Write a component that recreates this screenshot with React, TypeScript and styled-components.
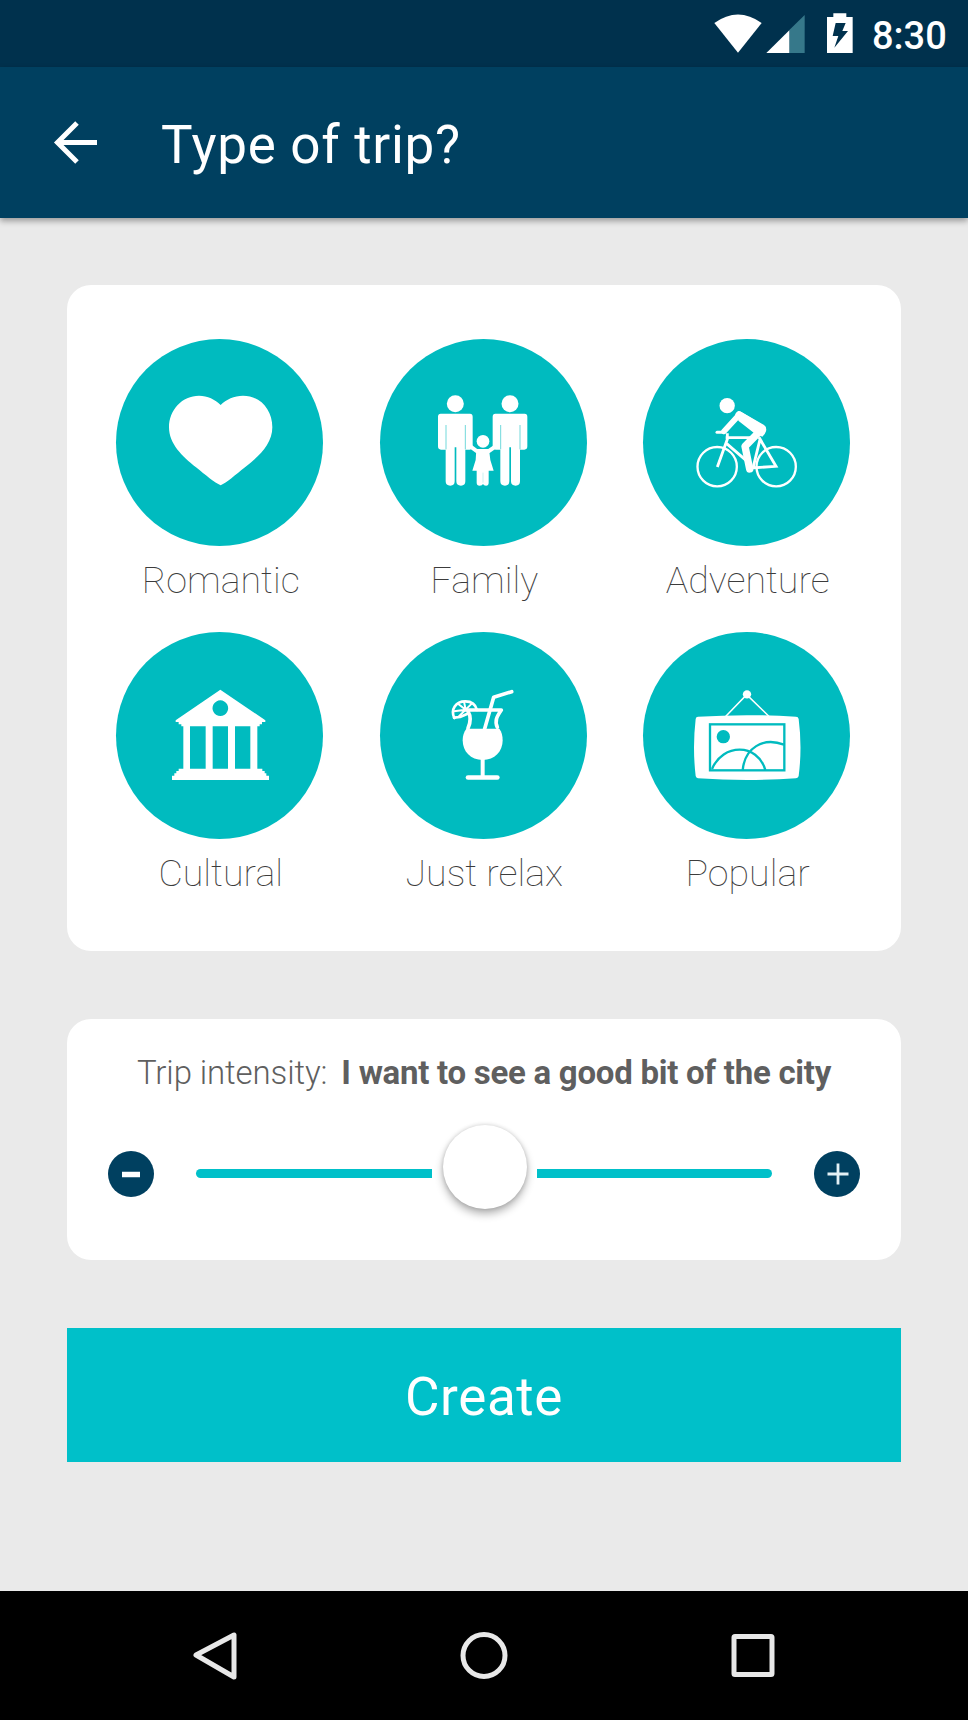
import React from "react";
import styled, { createGlobalStyle } from "styled-components";

const GlobalStyle = createGlobalStyle`
  * { box-sizing: border-box; }
  body { margin: 0; background: #eaeaea; font-family: Roboto, "Noto Sans", sans-serif; }
  button { font: inherit; border: 0; padding: 0; background: none; color: inherit; }
  svg { display: block; flex: none; }
`;

const Screen = styled.div`
  width: 968px;
  height: 1720px;
  display: flex;
  flex-direction: column;
  overflow: hidden;
  background: #eaeaea;
`;

const StatusBar = styled.div`
  flex: none;
  height: 67px;
  display: flex;
  align-items: center;
  justify-content: flex-end;
  padding-right: 22px;
  background: #00314d;
  color: #fff;
`;

const Clock = styled.span`
  width: 74px;
  margin-left: 18px;
  padding-top: 4px;
  font-size: 38px;
  font-weight: 500;
  line-height: 44px;
  white-space: nowrap;
`;

const AppBar = styled.header`
  flex: none;
  height: 151px;
  display: flex;
  align-items: center;
  gap: 62px;
  padding: 0 52px;
  background: #004060;
  color: #fff;
  box-shadow: 0 3px 6px rgba(0, 0, 0, 0.35);
  z-index: 1;
`;

const Title = styled.h1`
  margin: 4px 0 0;
  font-size: 53px;
  font-weight: 400;
  line-height: 64px;
  letter-spacing: 0.7px;
`;

const Content = styled.main`
  flex: 1;
  display: flex;
  flex-direction: column;
  gap: 68px;
  padding: 67px 67px 0;
`;

const Card = styled.section`
  background: #fff;
  border-radius: 24px;
  color: #5f5f5f;
`;

const TripCard = styled(Card)`
  height: 666px;
  padding: 54px 22.4px 0 21.2px;
  display: grid;
  grid-template-columns: repeat(3, 1fr);
  grid-auto-rows: 293px;
`;

const TripOption = styled.button`
  display: flex;
  flex-direction: column;
  align-items: center;
`;

const Disc = styled.span`
  width: 207px;
  height: 207px;
  border-radius: 50%;
  background: #00bbbf;
`;

const TripLabel = styled.span`
  margin-top: 12px;
  padding-left: 1.6px;
  font-size: 37.6px;
  font-weight: 100;
  line-height: 44px;
  color: #3c3c3c;
`;

const IntensityCard = styled(Card)`
  height: 241px;
  padding: 35px 41px 0;
`;

const IntensityText = styled.p`
  margin: 0;
  display: flex;
  justify-content: center;
  gap: 14px;
  font-size: 33px;
  font-weight: 300;
  line-height: 38px;
  letter-spacing: -0.12px;
  white-space: nowrap;
`;

const Strong = styled.strong`
  font-weight: 700;
  letter-spacing: -0.27px;
`;

const SliderRow = styled.div`
  margin-top: 59px;
  display: flex;
  align-items: center;
  justify-content: space-between;
`;

const StepButton = styled.button`
  width: 46px;
  height: 46px;
  border-radius: 50%;
  background: #004060;
`;

const Slider = styled.div`
  width: 576px;
  margin-bottom: 1px;
  display: flex;
  align-items: center;
  justify-content: space-between;
`;

const Track = styled.div<{ $side: "left" | "right" }>`
  width: ${(p) => (p.$side === "left" ? 236 : 235)}px;
  height: 9px;
  background: #00c0c9;
  border-radius: ${(p) => (p.$side === "left" ? "5px 0 0 5px" : "0 5px 5px 0")};
`;

const Thumb = styled.div`
  width: 84px;
  height: 84px;
  margin: -26px 0 -13px;
  border-radius: 50%;
  background: #fff;
  box-shadow: 0 5px 9px rgba(0, 0, 0, 0.3), 0 0 4px rgba(0, 0, 0, 0.16);
`;

const CreateButton = styled.button`
  flex: none;
  height: 134px;
  padding-top: 4px;
  background: #00c0c9;
  color: #fff;
  font-size: 53px;
  line-height: 64px;
  letter-spacing: 0.6px;
`;

const NavBar = styled.nav`
  flex: none;
  height: 129px;
  display: flex;
  justify-content: center;
  gap: 221px;
  padding-top: 39px;
  background: #000;
`;

const WHITE = "#fff";
const TEAL = "#00bbbf";

function HeartIcon() {
  return (
    <svg width="207" height="207" viewBox="49 57 621 621">
      <path
        fill={WHITE}
        d="M363 255C346 238 324 227 298 227C248 227 208 269 208 322C208 372 248 409 289 442C317 465 345 488 363 496C381 488 407 465 436 442C478 409 518 372 518 322C518 269 482 227 430 227C404 227 379 238 363 255Z"
      />
    </svg>
  );
}

function Adult({ x }: { x: number }) {
  return (
    <g transform={`translate(${x} 0)`}>
      <circle cx="0" cy="251" r="25.500" fill={WHITE} />
      <path
        fill={WHITE}
        d="M-44 281H44Q52 281 52 290V379Q52 389 43 389H30V484Q30 497 17 497Q3 497 3 484V382H-2V484Q-2 497-15 497Q-29 497-29 484V389H-43Q-52 389-52 379V290Q-52 281-44 281Z"
      />
      <path d="M-28 315V388M30 315V388" stroke={TEAL} strokeWidth="3" opacity=".55" />
    </g>
  );
}

function FamilyIcon() {
  return (
    <svg width="207" height="207" viewBox="30 57 621 621">
      <Adult x={256} />
      <Adult x={420} />
      <circle cx="339" cy="364" r="19" fill={WHITE} />
      <path d="M298 377L320 393H357L380 377" fill="none" stroke={WHITE} strokeWidth="12" />
      <path
        fill={WHITE}
        d="M319 387H357L361 420L371 452H356V488Q356 497 348 497Q341 497 339 492Q337 497 329 497Q320 497 320 488V452H307L317 420Z"
      />
      <path d="M339 458V488" stroke={TEAL} strokeWidth="1.500" opacity=".4" />
    </svg>
  );
}

function BikeIcon() {
  return (
    <svg width="207" height="207" viewBox="39 57 621 621">
      <circle cx="291.500" cy="257" r="23" fill={WHITE} />
      <g fill="none" stroke={WHITE}>
        <circle cx="261.500" cy="440" r="59" strokeWidth="7" />
        <circle cx="438.500" cy="440" r="59" strokeWidth="7" />
        <path d="M262 441L292 358V340M287 353H372M290 371L356 428M387 352L438 439L362 444M390 358L370 440" strokeWidth="8.500" />
        <path d="M261 337H282" strokeWidth="9" strokeLinecap="round" />
        <path d="M282 334L327 285" strokeWidth="17" strokeLinecap="round" />
        <path d="M327 285L396 327L345 379L359 447" strokeWidth="22" strokeLinejoin="round" strokeLinecap="round" />
      </g>
      <path fill={WHITE} d="M323 274Q328 272 333 275L402 315Q411 321 408 334Q405 344 397 350L371 338L325 302Z" />
    </svg>
  );
}

function MuseumIcon() {
  return (
    <svg width="207" height="207" viewBox="49 36 621 621">
      <path
        fill={WHITE}
        fillRule="evenodd"
        d="M362 209L497 301V306H487V313H480V319H473V446H488V453H495V460H500V467H508V480H217V467H224V460H230V453H237V446H251V319H245V313H237V306H228V301ZM362 241a23.500 23.500 0 1 0 .01 0ZM271 319V446H318V319ZM339 319V446H385V319ZM406 319V446H452V319Z"
      />
    </svg>
  );
}

function CocktailIcon() {
  return (
    <svg width="207" height="207" viewBox="30 36 621 621">
      <g fill="none" stroke={WHITE} strokeLinecap="round" strokeLinejoin="round">
        <path d="M344 326L371 232L425 215" strokeWidth="11" />
        <path d="M284 270H394C381 289 373 302 382 322M294 274C305 292 301 309 294 325" strokeWidth="11" />
        <path d="M253 294C241 268 257 244 286 244C304 244 317 254 321 270" strokeWidth="8" />
        <path d="M252 293L270 291L291 282" strokeWidth="8" />
        <path d="M287 269L252 274M287 269L264 251M287 269L282 245M287 269L306 250M287 269L265 291" strokeWidth="6" />
        <path d="M338 410V468" strokeWidth="12" />
        <path d="M294 472.500H382" strokeWidth="14" />
      </g>
      <path fill={WHITE} d="M289 326H388C395 336 398 347 398 361C398 395 374 420 338 420C302 420 278 395 278 361C278 347 282 336 289 326Z" />
    </svg>
  );
}

function PictureIcon() {
  return (
    <svg width="207" height="207" viewBox="39 36 621 621">
      <path d="M286 290L350 224L418 290" fill="none" stroke={WHITE} strokeWidth="4.500" />
      <circle cx="351" cy="223" r="12.500" fill={WHITE} />
      <path fill={WHITE} d="M204 290Q351 281 498 290Q505 290 506 297Q517 383 506 468Q505 474 498 475Q351 485 204 475Q198 474 197 468Q187 383 197 297Q198 290 204 290Z" />
      <g fill="none" stroke={TEAL} strokeWidth="7">
        <rect x="240" y="313" width="223" height="138" />
        <path d="M246 447C278 370 382 368 406 450M338 451C344 384 399 350 462 374" />
      </g>
      <circle cx="280" cy="350" r="20" fill={TEAL} />
    </svg>
  );
}

const trips = [
  { label: "Romantic", Icon: HeartIcon },
  { label: "Family", Icon: FamilyIcon },
  { label: "Adventure", Icon: BikeIcon },
  { label: "Cultural", Icon: MuseumIcon },
  { label: "Just relax", Icon: CocktailIcon },
  { label: "Popular", Icon: PictureIcon },
];

export default function App() {
  return (
    <>
      <GlobalStyle />
      <Screen>
        <StatusBar>
          <svg width="140" height="67" viewBox="0 0 420 201">
            <path fill={WHITE} d="M1 69Q72 18 143 69L72 158Z" />
            <path fill="#36788a" d="M226 90L272 45V159H226Z" />
            <path fill={WHITE} d="M157 159L226 91V159Z" />
            <path fill={WHITE} fillRule="evenodd" d="M339 51H358V40H397V51H416V159H339ZM365 69L356 108H373L361 143L402 93H385L395 69Z" />
          </svg>
          <Clock>8:30</Clock>
        </StatusBar>
        <AppBar>
          <svg width="47" height="47" viewBox="0 0 47 47">
            <path d="M45 23.500H6M25 4L5.500 23.500L25 43" fill="none" stroke={WHITE} strokeWidth="5" />
          </svg>
          <Title>Type of trip?</Title>
        </AppBar>
        <Content>
          <TripCard>
            {trips.map(({ label, Icon }) => (
              <TripOption key={label}>
                <Disc>
                  <Icon />
                </Disc>
                <TripLabel>{label}</TripLabel>
              </TripOption>
            ))}
          </TripCard>
          <IntensityCard>
            <IntensityText>
              <span>Trip intensity:</span>
              <Strong>I want to see a good bit of the city</Strong>
            </IntensityText>
            <SliderRow>
              <StepButton aria-label="Less">
                <svg width="46" height="46" viewBox="0 0 46 46">
                  <path d="M14 23.500H32" stroke={WHITE} strokeWidth="5.500" />
                </svg>
              </StepButton>
              <Slider>
                <Track $side="left" />
                <Thumb />
                <Track $side="right" />
              </Slider>
              <StepButton aria-label="More">
                <svg width="46" height="46" viewBox="0 0 46 46">
                  <path d="M13.500 23H34.500M24 12.500V33.500" stroke="#e3f1f6" strokeWidth="2.800" />
                </svg>
              </StepButton>
            </SliderRow>
          </IntensityCard>
          <CreateButton>Create</CreateButton>
        </Content>
        <NavBar>
          <svg width="50" height="54" viewBox="0 0 50 54">
            <path d="M46 5V47L8 25Z" fill="none" stroke="#e8e8e8" strokeWidth="5" strokeLinejoin="round" />
          </svg>
          <svg width="50" height="54" viewBox="0 0 50 54">
            <circle cx="25" cy="25.500" r="21" fill="none" stroke="#e8e8e8" strokeWidth="5" />
          </svg>
          <svg width="50" height="54" viewBox="0 0 50 54">
            <rect x="4" y="6.500" width="38" height="38" rx="1" fill="none" stroke="#e8e8e8" strokeWidth="5" />
          </svg>
        </NavBar>
      </Screen>
    </>
  );
}
